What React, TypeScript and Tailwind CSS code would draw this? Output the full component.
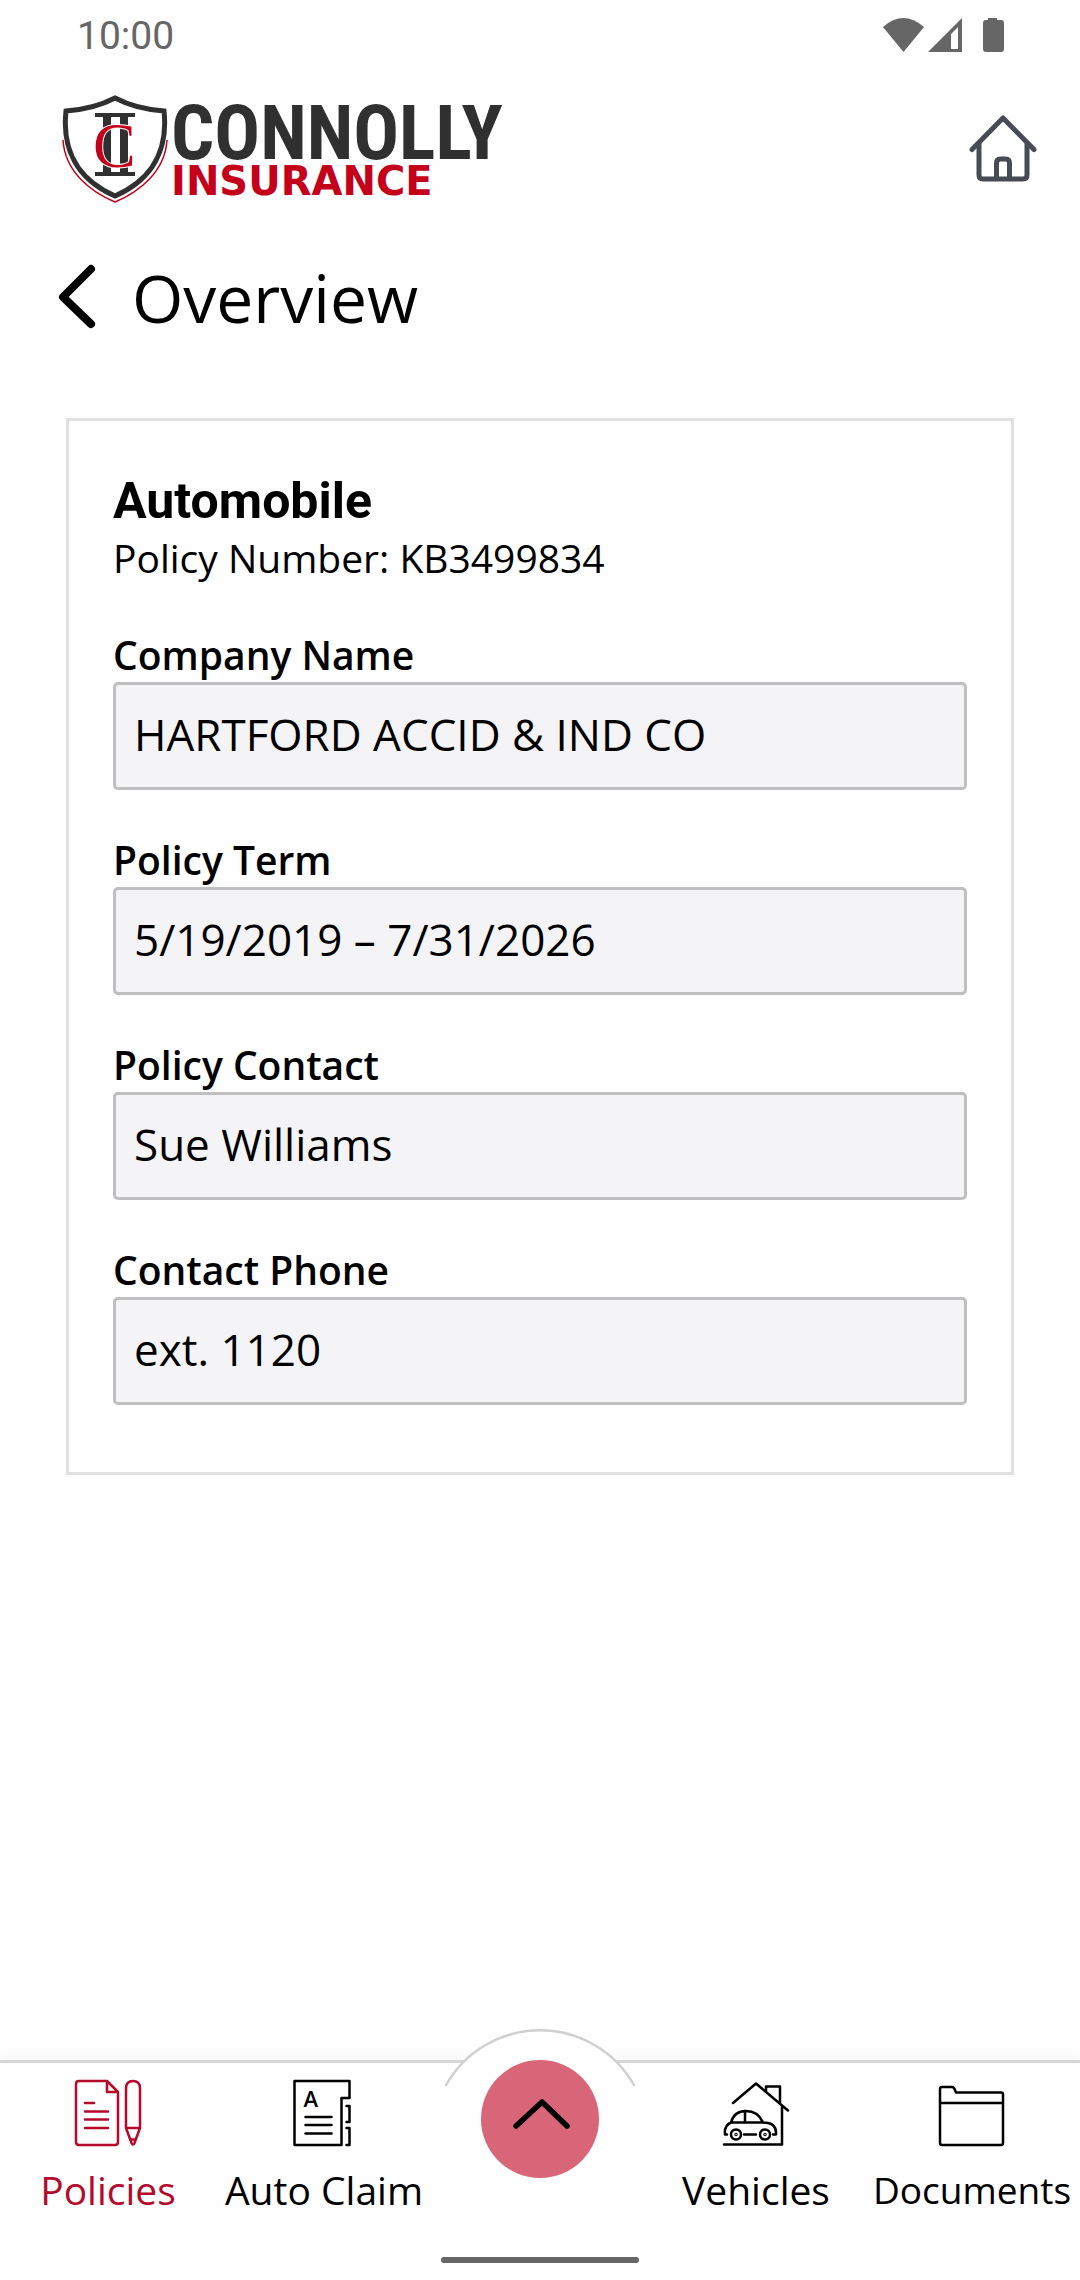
import type { ReactNode } from 'react'

// =====================
// DATA
// =====================
const fields = [
  { id: 'company', label: 'Company Name', value: 'HARTFORD ACCID & IND CO' },
  { id: 'term', label: 'Policy Term', value: '5/19/2019 – 7/31/2026' },
  { id: 'contact', label: 'Policy Contact', value: 'Sue Williams' },
  { id: 'phone', label: 'Contact Phone', value: 'ext. 1120' },
]

// =====================
// STATUS BAR
// =====================
function StatusBar() {
  return (
    <div className="flex h-[72px] items-center justify-between pr-[73px] pl-[77px] text-[#666]">
      <span className="font-['Roboto',sans-serif] text-[39px] leading-[72px]">10:00</span>

      <svg width="124" height="36" viewBox="0 0 124 36" fill="currentColor" aria-hidden="true">
        <path d="M0 9Q20-9 41 9L20.500 34z" />
        <path fillRule="evenodd" d="M45 34L79 0v34zM68 16v15h7V9z" />
        <path d="M105-1h9v3h4q3 0 3 3v26q0 3-3 3h-15q-3 0-3-3V5q0-3 3-3h2z" />
      </svg>
    </div>
  )
}

// =====================
// LOGO
// =====================
function Logo() {
  return (
    <a href="#home" aria-label="Connolly Insurance" className="flex items-start gap-[2px]">
      <svg width="108" height="110" viewBox="0 0 108 110" aria-hidden="true">
        <path
          d="M2 46C4 78 30 98 54 108C78 98 104 78 106 46"
          fill="none"
          stroke="#c4001a"
          strokeWidth="1.500"
        />
        <path
          d="M54 4Q33 15 5 17C1 54 15 85 54 102C93 85 107 54 103 17Q75 15 54 4z"
          fill="#fff"
          stroke="#303030"
          strokeWidth="5"
        />
        <path d="M34 21h40M34 80h40" stroke="#303030" strokeWidth="4" />
        <path d="M46 21v59M63 21v59" stroke="#303030" strokeWidth="8" />
        <text
          x="32"
          y="73"
          fontFamily="Liberation Serif, serif"
          fontSize="64"
          fill="#c4001a"
          stroke="#fff"
          strokeWidth="2"
          paintOrder="stroke"
        >
          C
        </text>
      </svg>

      <span className="flex flex-col pt-[4px] font-bold">
        <span className="font-['Liberation_Sans_Narrow','Roboto_Condensed','Open_Sans_Condensed','Liberation_Sans',sans-serif] text-[76px] leading-[70px] text-[#303030]">
          CONNOLLY
        </span>
        <span className="font-['DejaVu_Sans',sans-serif] text-[40px] leading-[26px] text-[#c4001a]">
          INSURANCE
        </span>
      </span>
    </a>
  )
}

// =====================
// NAV ICONS
// =====================
function NavIcon({ children }: { children: ReactNode }) {
  return (
    <svg
      width="68"
      height="68"
      viewBox="0 0 68 68"
      fill="none"
      stroke="currentColor"
      strokeWidth="2.500"
      strokeLinecap="round"
      strokeLinejoin="round"
      aria-hidden="true"
    >
      {children}
    </svg>
  )
}

function PoliciesIcon() {
  return (
    <NavIcon>
      <path d="M33 2H5Q2 2 2 5v58q0 3 3 3h36q3 0 3-3V13zM33 2v11h11" />
      <path d="M11 24h9M11 32.500h23M11 40.500h23M11 49h23" />
      <path d="M52 9.500q0-7.500 7-7.500t7 7.500V49l-5.500 15q-1.500 3-3 0L52 49zM52 49h14M56.500 60.500h5" />
    </NavIcon>
  )
}

function ClaimIcon() {
  return (
    <NavIcon>
      <path d="M4.500 2h55v17h-8v47h-47z" />
      <path d="M15.500 38h26M15.500 46h26M15.500 54.500h26" />
      <path d="M56.500 27h3v16h-3M56.500 49h3v17h-3" />
      <text
        x="13.500"
        y="28"
        fontFamily="Open Sans, sans-serif"
        fontSize="22"
        fontWeight="600"
        fill="currentColor"
        stroke="none"
      >
        A
      </text>
    </NavIcon>
  )
}

function VehiclesIcon() {
  return (
    <NavIcon>
      <path d="M11 24L34 4.500l32 27M44 13V7.500h14V24M60 28v37.500H2" />
      <path d="M5 55.500H3q-1-9 6-12Q12 32 24 32t17 11.500q14 0 13 12h-3M9 43.500h32M23 32v11.500M22 55.500h12" />
      <circle cx="14" cy="55.500" r="5" />
      <circle cx="43" cy="55.500" r="5" />
      <circle cx="14" cy="55.500" r="0.500" />
      <circle cx="43" cy="55.500" r="0.500" />
    </NavIcon>
  )
}

function DocumentsIcon() {
  return (
    <NavIcon>
      <path d="M2 64V10q0-2 2-2h10q2 0 3 3l1 2.500h45q2 0 2 2V64q0 2-2 2H4q-2 0-2-2zM2 24h63" />
    </NavIcon>
  )
}

function NavItem({ href, label, active, small, children }: any) {
  return (
    <a
      href={href}
      aria-current={active ? 'page' : undefined}
      className={`flex flex-1 basis-0 flex-col items-center gap-[15px] whitespace-nowrap pt-[16px] ${
        active ? 'text-[#b50a2b]' : 'text-black'
      } ${small ? 'text-[37px]' : 'text-[39px]'}`}
    >
      {children}
      <span className="leading-[56px]">{label}</span>
    </a>
  )
}

// =====================
// BOTTOM NAV
// =====================
function BottomNav() {
  return (
    <nav className="relative mt-auto flex h-[220px] border-t-[3px] border-[#d6d6d6] bg-[#fefefe] shadow-[0_-4px_10px_rgba(0,0,0,0.03)]">
      <NavItem href="#policies" label="Policies" active>
        <PoliciesIcon />
      </NavItem>
      <NavItem href="#claim" label="Auto Claim">
        <ClaimIcon />
      </NavItem>

      {/* raised bump sits over the top border */}
      <div className="relative flex flex-1 basis-0 justify-center">
        <svg
          className="absolute -top-[36px]"
          width="196"
          height="60"
          viewBox="0 0 196 60"
          aria-hidden="true"
        >
          <path
            d="M3.500 59A108 108 0 0 1 192.500 59"
            fill="#fefefe"
            stroke="#d0d0d0"
            strokeWidth="2.500"
          />
        </svg>
        <button
          type="button"
          aria-label="Open menu"
          className="absolute -top-[3px] flex h-[118px] w-[118px] items-center justify-center rounded-full bg-[#d96678]"
        >
          <svg width="60" height="40" viewBox="0 0 60 40" fill="none" aria-hidden="true">
            <path
              d="M6 27L32 3L57 27"
              stroke="#000"
              strokeWidth="5.500"
              strokeLinecap="round"
              strokeLinejoin="round"
            />
          </svg>
        </button>
      </div>

      <NavItem href="#vehicles" label="Vehicles">
        <VehiclesIcon />
      </NavItem>
      <NavItem href="#documents" label="Documents" small>
        <DocumentsIcon />
      </NavItem>

      {/* gesture handle */}
      <div className="absolute inset-x-0 bottom-[17px] mx-auto h-[6px] w-[198px] rounded-full bg-[#666]" />
    </nav>
  )
}

// =====================
// PAGE
// =====================
export default function App() {
  return (
    <div className="flex min-h-screen flex-col bg-[#fefefe] font-['Open_Sans',sans-serif] text-black">
      <StatusBar />

      {/* HEADER */}
      <header className="flex items-start justify-between pt-[22px] pr-[43px] pl-[61px]">
        <Logo />
        <a href="#home" aria-label="Home" className="mt-[21px]">
          <svg
            width="68"
            height="68"
            viewBox="0 0 68 68"
            fill="none"
            stroke="#484a54"
            strokeWidth="5"
            strokeLinecap="round"
            strokeLinejoin="round"
            aria-hidden="true"
          >
            <path d="M3 34.500L34 3l31 31.500" />
            <path d="M10 29v31q0 4 4 4h40q4 0 4-4V29" />
            <path d="M27.500 63V48q0-4 4-4h5q4 0 4 4v15" />
          </svg>
        </a>
      </header>

      {/* TITLE */}
      <div className="flex items-center gap-[36px] pt-[53px] pl-[58px]">
        <button type="button" aria-label="Back">
          <svg width="38" height="66" viewBox="0 0 38 66" fill="none" aria-hidden="true">
            <path
              d="M33 5L5 33l28 27"
              stroke="#000"
              strokeWidth="8"
              strokeLinecap="round"
              strokeLinejoin="round"
            />
          </svg>
        </button>
        <h1 className="text-[66px] leading-[80px]">Overview</h1>
      </div>

      {/* POLICY CARD */}
      <main className="px-[66px] pt-[81px] pb-[66px]">
        <section className="border-[3px] border-[#e1e1e1] px-[44px] pt-[51px] pb-[67px]">
          <h2 className="font-['Roboto',sans-serif] text-[50px] leading-[58px] font-bold">
            Automobile
          </h2>
          <p className="text-[39px] leading-[56px]">Policy Number: KB3499834</p>

          <div className="mt-[41px] flex flex-col gap-[42px]">
            {fields.map(f => (
              <div key={f.id} className="flex flex-col">
                <label htmlFor={f.id} className="text-[39px] leading-[55px] font-semibold">
                  {f.label}
                </label>
                <input
                  id={f.id}
                  readOnly
                  defaultValue={f.value}
                  className="h-[108px] w-full rounded-[5px] border-[3px] border-[#bfbfbf] bg-[#f4f4f6] px-[18px] pb-[4px] text-[44px] outline-none"
                />
              </div>
            ))}
          </div>
        </section>
      </main>

      <BottomNav />
    </div>
  )
}
